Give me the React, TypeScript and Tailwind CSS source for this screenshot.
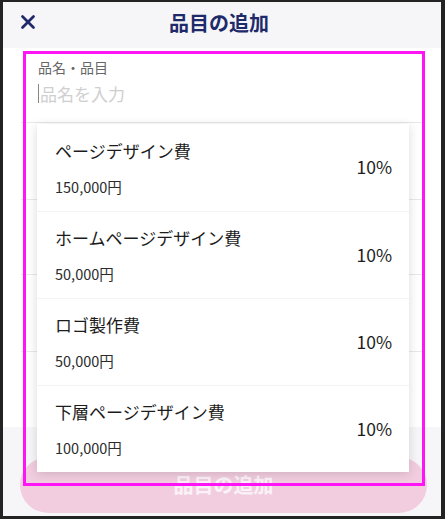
import { X } from 'lucide-react';

const ITEMS = [
  { name: 'ページデザイン費', price: '150,000円', tax: '10%' },
  { name: 'ホームページデザイン費', price: '50,000円', tax: '10%' },
  { name: 'ロゴ製作費', price: '50,000円', tax: '10%' },
  { name: '下層ページデザイン費', price: '100,000円', tax: '10%' },
];

function App() {
  return (
    <div
      className="w-[445px] h-[519px] bg-[#232323] pt-[2px] pl-[3px] pr-[4px] pb-[3px]"
      style={{ fontFamily: '"Noto Sans CJK JP", "Noto Sans", sans-serif' }}
    >
      <div className="relative flex flex-col h-full bg-white overflow-hidden">
        {/* Header */}
        <div className="relative flex items-center justify-center h-[46px] pb-[5px] bg-[#f6f6f9] shrink-0">
          <button className="absolute left-[14px] top-[9px] text-[#1f2a6b]">
            <X className="h-[22px] w-[22px]" strokeWidth={3} />
          </button>
          <h1 className="text-[20px] font-bold text-[#1f2a6b] leading-none pr-[6px]">品目の追加</h1>
        </div>

        {/* Form */}
        <div className="flex-1 flex flex-col">
          <div className="mx-[18px] h-[75px] border-b border-[#e8e8e8] px-[17px] pt-[9px]">
            <div className="text-[14px] text-[#666] leading-[20px]">品名・品目</div>
            <div className="flex items-center mt-[4px] h-[24px]">
              <span className="w-[1px] h-[19px] bg-[#888] mr-[1px]" />
              <span className="text-[17px] text-[#cfcfcf] leading-none">品名を入力</span>
            </div>
          </div>
          <div className="mx-[18px] h-[77px] border-b border-[#e8e8e8]" />
          <div className="mx-[18px] h-[75px] border-b border-[#e8e8e8]" />
          <div className="mx-[18px] h-[77px] border-b border-[#e8e8e8]" />
        </div>

        {/* Footer */}
        <div className="h-[89px] shrink-0 bg-[#f6f6f9] pt-[30px] pl-[17px] pr-[14px]">
          <button className="w-full h-[56px] rounded-full bg-[#f2cde0] text-[20px] font-bold text-[#faf2f6]">
            品目の追加
          </button>
        </div>

        {/* Dropdown */}
        <div className="absolute left-[34px] top-[122px] w-[372px] bg-white shadow-[0_2px_10px_rgba(0,0,0,0.15)]">
          {ITEMS.map((item, i) => (
            <div
              key={item.name}
              className={`flex items-center h-[87px] pl-[18px] pr-[17px] ${i > 0 ? 'border-t border-[#f3f3f3]' : ''}`}
            >
              <div className="flex-1 flex flex-col">
                <span className="text-[17px] text-[#1c1c1c] leading-[24px]">{item.name}</span>
                <span className="text-[14.5px] text-[#2c2c2c] leading-[20px] mt-[14px]">{item.price}</span>
              </div>
              <span className="text-[17.5px] text-[#1c1c1c]">{item.tax}</span>
            </div>
          ))}
        </div>

        {/* Highlight */}
        <div className="absolute left-[20px] top-[49px] w-[402px] h-[435px] border-[3px] border-[#ff14f5] pointer-events-none" />
      </div>
    </div>
  );
}

export default App;
